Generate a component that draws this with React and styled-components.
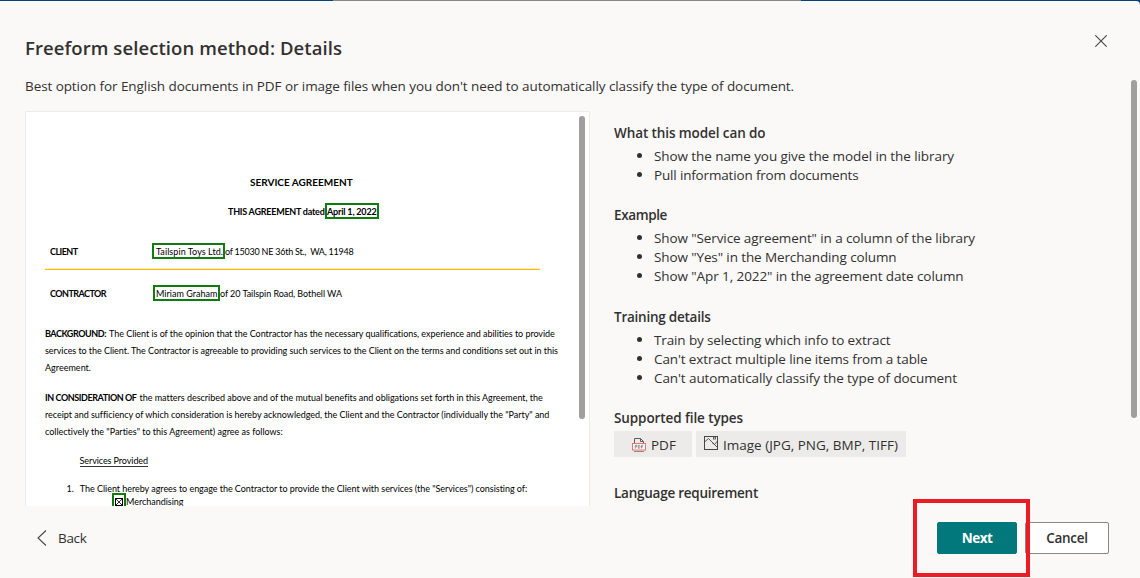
import React from "react";
import styled, { createGlobalStyle } from "styled-components";

const Global = createGlobalStyle`
  * { box-sizing: border-box; }
  html, body { margin: 0; }
  body {
    background: #004578;
    color: #323130;
    font-family: "Open Sans", sans-serif;
    font-size: 13.5px;
    overflow: hidden;
  }
`;

const Page = styled.div`
  width: 1140px;
  height: 578px;
  display: flex;
  flex-direction: column;
  background: linear-gradient(to right, #004578 333px, #8a8886 333px, #8a8886 801px, #004578 801px);
`;

const Panel = styled.main`
  position: relative;
  flex: 1;
  margin-top: 1px;
  background: #faf9f8;
  border-top-right-radius: 4px;
  display: flex;
  flex-direction: column;
`;

const Header = styled.header`
  display: flex;
  justify-content: space-between;
  height: 74px;
  padding: 34px 33px 0 25px;
`;

const Title = styled.h1`
  margin: 0;
  font-size: 18.5px;
  font-weight: 600;
  line-height: 26px;
  letter-spacing: 0.085px;
`;

const CloseIcon = styled.svg`
  width: 12px;
  height: 12px;
`;

const Text = styled.span`
  letter-spacing: ${(p) => p.$ls || 0}px;
  white-space: pre;
`;

const Intro = styled.p`
  margin: 0 0 0 25px;
  padding-top: 1px;
  height: 36px;
  line-height: 20px;
`;

const Body = styled.div`
  display: flex;
  height: 395px;
  gap: 24px;
  padding-left: 25px;
`;

const Preview = styled.section`
  display: flex;
  justify-content: space-between;
  width: 565px;
  height: 395px;
  overflow: hidden;
  background: #fff;
  border: 1px solid #edebe9;
  border-bottom: 0;
  border-radius: 2px 2px 0 0;
`;

const Thumb = styled.div`
  flex: none;
  width: 6px;
  height: ${(p) => p.$h}px;
  margin: ${(p) => p.$m};
  border-radius: 3px;
  background: #a09f9e;
`;

const Doc = styled.article`
  width: 540px;
  padding-left: 19px;
  color: #000;
  font-family: Lato, sans-serif;
  font-size: 9px;
`;

const Line = styled.div`
  display: flex;
  align-items: center;
  height: 17px;
  line-height: 17px;
  margin-top: ${(p) => p.$gap || 0}px;
  padding-left: ${(p) => p.$indent || 0}px;
  font-size: ${(p) => p.$size || 9}px;
`;

const Label = styled.div`
  width: ${(p) => p.$w}px;
  font-weight: 700;
`;

const Strong = styled(Text)`
  font-weight: 700;
  margin-right: 3px;
`;

const Tag = styled.span`
  display: flex;
  align-items: center;
  align-self: flex-start;
  flex: none;
  width: ${(p) => p.$w}px;
  height: 16px;
  padding: 1px 0 0 ${(p) => p.$pad || 0}px;
  border: 2px solid #107c10;
  font-weight: ${(p) => (p.$bold ? 700 : 400)};
`;

const Rule = styled.div`
  width: 495px;
  height: 1px;
  margin-top: 9px;
  background: #ffb900;
  box-shadow: 0 -1px 0 #ffedc0;
`;

const Underlined = styled(Text)`
  border-bottom: 1px solid #333;
  line-height: 10px;
`;

const Details = styled.section`
  width: 517px;
  padding-top: 13px;
`;

const Group = styled.div`
  margin-bottom: ${(p) => p.$gap || 21.4}px;
`;

const Heading = styled.h2`
  margin: 0;
  font-size: 13.5px;
  font-weight: 600;
  line-height: 19px;
`;

const List = styled.ul`
  margin: 4px 0 0;
  padding: 0;
  list-style: none;
`;

const Item = styled.li`
  display: flex;
  align-items: center;
  height: 19px;
  padding-left: 23px;
  line-height: 19px;
  &::before {
    content: "";
    width: 5px;
    height: 5px;
    margin-right: 12px;
    border-radius: 50%;
    background: #323130;
    position: relative;
    top: -1px;
  }
`;

const Chips = styled.div`
  display: flex;
  gap: 4px;
  margin-top: 3px;
`;

const Chip = styled.div`
  display: flex;
  align-items: center;
  width: ${(p) => p.$w}px;
  height: 26px;
  padding: 1px 0 0 ${(p) => p.$pad}px;
  background: #edebe9;
`;

const ChipIcon = styled.svg`
  flex: none;
  width: 14px;
  height: 16px;
  margin-right: 5px;
  margin-bottom: ${(p) => p.$lift || 0}px;
`;

const Footer = styled.footer`
  display: flex;
  align-items: center;
  flex: 1;
  padding: 0 31px 8px 37px;
`;

const Back = styled.button`
  display: flex;
  align-items: center;
  gap: 11px;
  margin-right: auto;
  padding: 0;
  border: 0;
  background: none;
  color: inherit;
  font: inherit;
`;

const Button = styled.button`
  width: ${(p) => (p.$primary ? 80 : 84)}px;
  height: 32px;
  padding: 0;
  border: 1px solid ${(p) => (p.$primary ? "#03787c" : "#8a8886")};
  border-radius: 2px;
  background: ${(p) => (p.$primary ? "#03787c" : "#fff")};
  color: ${(p) => (p.$primary ? "#fff" : "#323130")};
  font: ${(p) => (p.$primary ? 700 : 600)} 13.5px "Open Sans", sans-serif;
  margin-left: ${(p) => (p.$primary ? 0 : 8)}px;
`;

const Highlight = styled.div`
  position: absolute;
  left: 913px;
  top: 498px;
  width: 117px;
  height: 78px;
  border: 4px solid #ed1c24;
  pointer-events: none;
`;

const PageScroll = styled.div`
  position: absolute;
  left: 1131px;
  top: 79px;
`;

const groups = [
  { title: ["What this model can do", -0.096], items: [
    ["Show the name you give the model in the library", -0.082],
    ["Pull information from documents", -0.166],
  ] },
  { title: ["Example", -0.377], items: [
    ['Show "Service agreement" in a column of the library', -0.106],
    ['Show "Yes" in the Merchanding column', -0.113],
    ['Show "Apr 1, 2022" in the agreement date column', -0.09],
  ] },
  { title: ["Training details", -0.244], items: [
    ["Train by selecting which info to extract", -0.124],
    ["Can't extract multiple line items from a table", -0.123],
    ["Can't automatically classify the type of document", -0.094],
  ] },
];

function PdfIcon() {
  return (
    <ChipIcon viewBox="0 0 14 16" fill="none">
      <path d="M2.5 6V1.5H8.5L11.5 4.5V6M8.5 1.5V4.5H11.5" stroke="#605e5c" />
      <path d="M2 14.5H12" stroke="#8a8886" />
      <rect x="0.5" y="6.5" width="13" height="6.5" fill="#fff" stroke="#f0706c" />
      <path d="M3.3 11.5V8.2H4.8V9.8H3.3M6.3 8.2V11.2H7.2L8 10.5V8.9L7.2 8.2H6.3M9.6 11.5V8.2H11.4M9.6 9.8H11" stroke="#797775" strokeWidth="0.8" />
    </ChipIcon>
  );
}

function ImageIcon() {
  return (
    <ChipIcon $lift={2} viewBox="0 0 14 16" fill="none" stroke="#484644">
      <rect x="0.5" y="0.5" width="13" height="13" />
      <path d="M0.5 6L4.5 2.5L13.5 11.5M8 6.5L10.5 8.5L13.5 5" strokeWidth="0.9" />
      <rect x="9.5" y="1" width="2" height="2" strokeWidth="0.8" />
    </ChipIcon>
  );
}

export default function App() {
  return (
    <Page>
      <Global />
      <Panel>
        <Header>
          <Title>Freeform selection method: Details</Title>
          <CloseIcon viewBox="0 0 12 12" stroke="#484644" strokeWidth="1.1">
            <path d="M0.3 0.3L11.7 11.7M11.7 0.3L0.3 11.7" />
          </CloseIcon>
        </Header>
        <Intro>
          <Text $ls={-0.081}>Best option for English documents in PDF or image files when you don't need to automatically classify the type of document.</Text>
        </Intro>
        <Body>
          <Preview>
            <Doc>
              <Line $gap={62} $indent={205} $size={10}><Strong>SERVICE AGREEMENT</Strong></Line>
              <Line $gap={12} $indent={183}>
                <Label $w={97}><Text $ls={-0.241}>THIS AGREEMENT dated</Text></Label>
                <Tag $w={54} $bold><Text $ls={-0.178}>April 1, 2022</Text></Tag>
              </Line>
              <Line $gap={23} $indent={5}>
                <Label $w={102}><Text $ls={-0.552}>CLIENT</Text></Label>
                <Tag $w={73} $pad={2}><Text $ls={0.069}>Tailspin Toys Ltd.</Text></Tag>
                <Text $ls={-0.238}>of 15030 NE 36th St.,  WA, 11948</Text>
              </Line>
              <Rule />
              <Line $gap={15} $indent={5}>
                <Label $w={103}><Text $ls={-0.547}>CONTRACTOR</Text></Label>
                <Tag $w={67} $pad={1}><Text $ls={0.028}>Miriam Graham</Text></Tag>
                <Text $ls={-0.057}>of 20 Tailspin Road, Bothell WA</Text>
              </Line>
              <Line $gap={23}>
                <Strong $ls={-0.45}>BACKGROUND:</Strong>
                <Text $ls={-0.041}>The Client is of the opinion that the Contractor has the necessary qualifications, experience and abilities to provide</Text>
              </Line>
              <Line><Text $ls={-0.053}>services to the Client. The Contractor is agreeable to providing such services to the Client on the terms and conditions set out in this</Text></Line>
              <Line><Text $ls={0.016}>Agreement.</Text></Line>
              <Line $gap={13}>
                <Strong $ls={-0.43}>IN CONSIDERATION OF</Strong>
                <Text $ls={-0.023}>the matters described above and of the mutual benefits and obligations set forth in this Agreement, the</Text>
              </Line>
              <Line><Text $ls={-0.028}>receipt and sufficiency of which consideration is hereby acknowledged, the Client and the Contractor (individually the "Party" and</Text></Line>
              <Line><Text $ls={-0.006}>collectively the "Parties" to this Agreement) agree as follows:</Text></Line>
              <Line $gap={13} $indent={34.5}><Underlined $ls={-0.082}>Services Provided</Underlined></Line>
              <Line $gap={10} $indent={21.5}>
                <Text>{"1."}</Text>
                <Line $indent={6}><Text $ls={-0.04}>The Client hereby agrees to engage the Contractor to provide the Client with services (the "Services") consisting of:</Text></Line>
              </Line>
              <Line $gap={-4} $indent={67}>
                <Tag $w={14}>
                  <svg width="10" height="12" viewBox="0 0 10 12" fill="none" stroke="#000">
                    <rect x="1.5" y="2.5" width="7" height="7" />
                    <path d="M2 3L8 9M8 3L2 9" strokeWidth="0.8" />
                  </svg>
                </Tag>
                <Text $ls={-0.026}>Merchandising</Text>
              </Line>
            </Doc>
            <Thumb $h={303} $m="4px 4px 0 0" />
          </Preview>
          <Details>
            {groups.map((g) => (
              <Group key={g.title[0]}>
                <Heading><Text $ls={g.title[1]}>{g.title[0]}</Text></Heading>
                <List>
                  {g.items.map(([t, ls]) => <Item key={t}><Text $ls={ls}>{t}</Text></Item>)}
                </List>
              </Group>
            ))}
            <Group $gap={26.8}>
              <Heading><Text $ls={-0.096}>Supported file types</Text></Heading>
              <Chips>
                <Chip $w={78} $pad={18}><PdfIcon /><Text>PDF</Text></Chip>
                <Chip $w={210} $pad={8}><ImageIcon /><Text>Image (JPG, PNG, BMP, TIFF)</Text></Chip>
              </Chips>
            </Group>
            <Heading><Text $ls={-0.247}>Language requirement</Text></Heading>
          </Details>
        </Body>
        <Footer>
          <Back>
            <svg width="10" height="16" viewBox="0 0 10 16" fill="none" stroke="#484644" strokeWidth="1.1"><path d="M9 0.5L1 8L9 15.5" /></svg>
            <Text $ls={-0.324}>Back</Text>
          </Back>
          <Button $primary><Text $ls={-0.5}>Next</Text></Button>
          <Button><Text $ls={-0.286}>Cancel</Text></Button>
        </Footer>
        <PageScroll><Thumb $h={338} $m="0" /></PageScroll>
        <Highlight />
      </Panel>
    </Page>
  );
}
